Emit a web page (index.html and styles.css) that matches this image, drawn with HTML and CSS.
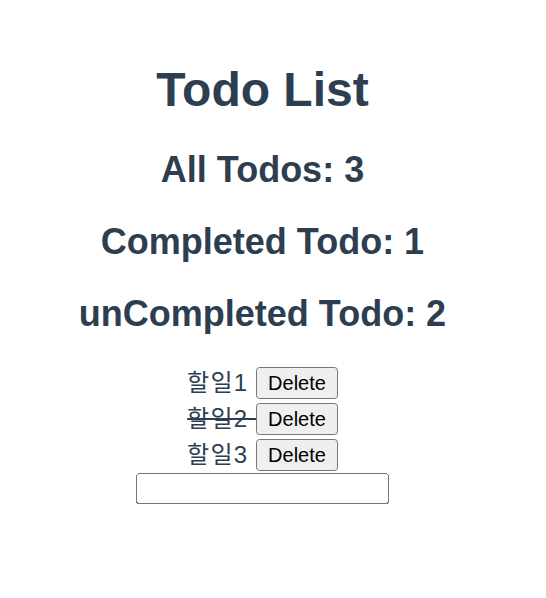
FILE: index.html
```html
<!DOCTYPE html>
<html>
<head>
<meta charset="utf-8">
<link rel="stylesheet" href="styles.css">
</head>
<body class="page">
<div class="app">
  <h1 class="title">Todo List</h1>
  <h2 class="count">All Todos: 3</h2>
  <h2 class="count">Completed Todo: 1</h2>
  <h2 class="count">unCompleted Todo: 2</h2>
  <div class="todos">
    <div class="todo"><span class="label">할일1 </span><button class="del">Delete</button></div>
    <div class="todo"><span class="label done">할일2 </span><button class="del">Delete</button></div>
    <div class="todo"><span class="label">할일3 </span><button class="del">Delete</button></div>
    <div class="adder"><input class="new" type="text"></div>
  </div>
</div>
</body>
</html>
```
FILE: styles.css
```css
html { background: #fff; }
.page {
  margin: 8px;
  zoom: 1.5;
}
.app {
  font-family: "Liberation Sans", Arial, "Noto Sans CJK KR", sans-serif;
  color: #2c3e50;
  text-align: center;
  padding-top: 12px;
  padding-right: 14px;
}
.title { font-size: 32px; margin: 21.44px 0; }
.count { font-size: 24px; margin: 19.92px 0; }
.todo { line-height: 18.4px; height: 24px; display: flex; justify-content: center; align-items: center; }
.label { font-family: "Liberation Sans", Arial, "Noto Sans CJK KR", sans-serif; letter-spacing: 0.8px; white-space: pre; }
.done { text-decoration: line-through; }
.del { font-family: "Liberation Sans", Arial, sans-serif; font-size: 13.333px; height: 21px; }
.adder { line-height: 18.4px; }
.new { font-family: "Liberation Sans", Arial, sans-serif; box-sizing: border-box; width: 169px; height: 21px; }
```
